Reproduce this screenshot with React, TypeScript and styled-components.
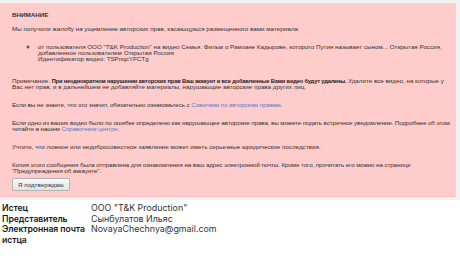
import React from 'react';
import styled, { createGlobalStyle } from 'styled-components';

const Global = createGlobalStyle`
    body {
        margin: 0;
        background: #ffffff;
        font-family: "Liberation Sans", Arial, sans-serif;
    }
`;

const App: React.FC = () => {
    return (
        <>
            <Global />
            <S.Frame>
                <S.Warning>
                    <S.Title>ВНИМАНИЕ</S.Title>
                    <S.Para>Мы получили жалобу на ущемление авторских прав, касающуюся размещенного вами материала:</S.Para>
                    <S.List>
                        <li>
                            от пользователя ООО "T&amp;K Production" на видео Семья. Фильм о Рамзане Кадырове, которого Путин называет сыном... Открытая Россия,
                            <br />добавленное пользователем Открытая Россия
                            <br />Идентификатор видео: TSPnqcYFCTg
                        </li>
                    </S.List>
                    <S.Para>
                        Примечание. <S.Strong>При неоднократном нарушении авторских прав Ваш аккаунт и все добавленные Вами видео будут удалены.</S.Strong> Удалите все видео, на которые у Вас нет прав, и в дальнейшем не добавляйте материалы, нарушающие авторские права других лиц.
                    </S.Para>
                    <S.Para $tight>
                        Если вы не знаете, что это значит, обязательно ознакомьтесь с <S.Link>Советами по авторским правам</S.Link>.
                    </S.Para>
                    <S.Para $tight>
                        Если одно из ваших видео было по ошибке определено как нарушающее авторские права, вы можете подать встречное уведомление. Подробнее об этом читайте в нашем <S.Link>Справочном центре</S.Link>.
                    </S.Para>
                    <S.Para>Учтите, что ложное или недобросовестное заявление может иметь серьезные юридические последствия.</S.Para>
                    <S.Para $last $tight>
                        Копия этого сообщения была отправлена для ознакомления на ваш адрес электронной почты. Кроме того, прочитать его можно на странице "Предупреждения об аккаунте".
                    </S.Para>
                    <S.Button>Я подтверждаю</S.Button>
                </S.Warning>
            </S.Frame>
            <S.Table>
                <S.Label>Истец</S.Label>
                <S.Value>ООО "T&amp;K Production"</S.Value>
                <S.Label>Представитель</S.Label>
                <S.Value>Сынбулатов Ильяс</S.Value>
                <S.Label>Электронная почта истца</S.Label>
                <S.Value>NovayaChechnya@gmail.com</S.Value>
            </S.Table>
        </>
    );
};

const S = {
    Frame: styled.div`
        background: #f2f2f2;
        padding: 3px 4px 3px 0;
    `,
    Warning: styled.div`
        background: #ffcccc;
        border-bottom: 1px solid #f4bcbc;
        padding: 9px 6px 5px 12px;
        color: #333333;
        font-size: 6.25px;
        line-height: 6px;
    `,
    Title: styled.div`
        font-weight: bold;
        margin-bottom: 8px;
    `,
    Para: styled.p<{ $last?: boolean; $tight?: boolean }>`
        margin: 0 0 ${p => (p.$last ? '4px' : '12px')} 0;
        letter-spacing: ${p => (p.$tight ? '-0.1px' : 'normal')};
    `,
    Strong: styled.b`
        font-size: 5.7px;
        letter-spacing: -0.15px;
        color: #222222;
    `,
    List: styled.ul`
        margin: 1px 0 16px 0;
        padding-left: 26px;
        list-style: circle;
    `,
    Link: styled.span`
        color: #5a7cc9;
    `,
    Button: styled.button`
        display: block;
        height: 13px;
        padding: 0 5px;
        font-family: "Liberation Sans", Arial, sans-serif;
        font-size: 6.25px;
        color: #333333;
        background: linear-gradient(#fafafa, #e2e2e2);
        border: 1px solid #b4b4b4;
        border-radius: 2px;
    `,
    Table: styled.div`
        display: grid;
        grid-template-columns: 89px 1fr;
        padding: 3px 0 0 2px;
        font-family: Inter, "Noto Sans", sans-serif;
        font-size: 8.9px;
        line-height: 10.7px;
        color: #222222;
    `,
    Label: styled.div`
        font-weight: 600;
        font-size: 8.7px;
        letter-spacing: -0.1px;
        color: #1a1a1a;
    `,
    Value: styled.div`
        color: #333333;
    `,
};

export default App;
